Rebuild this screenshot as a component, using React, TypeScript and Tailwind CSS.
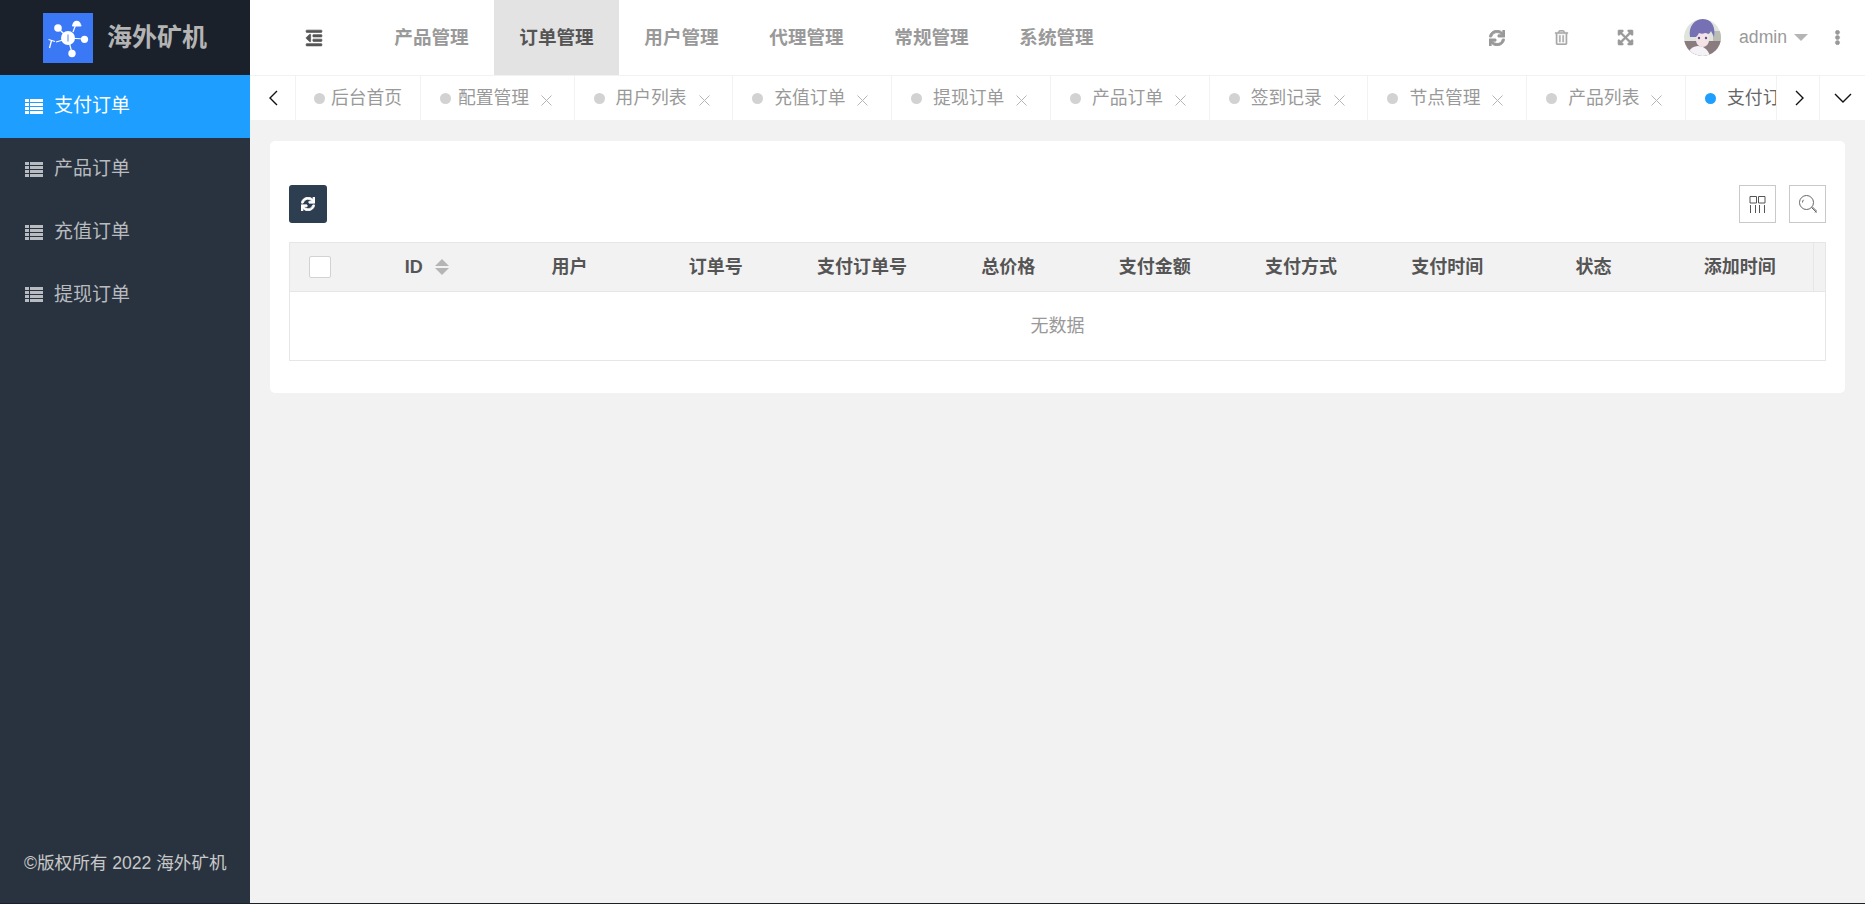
import { FaSync, FaRegTrashAlt, FaExpandArrowsAlt, FaOutdent, FaEllipsisV } from "react-icons/fa";

const menus = ["支付订单", "产品订单", "充值订单", "提现订单"];
const topNav = ["产品管理", "订单管理", "用户管理", "代理管理", "常规管理", "系统管理"];
const columns = ["用户", "订单号", "支付订单号", "总价格", "支付金额", "支付方式", "支付时间", "状态", "添加时间"];
const tabs = ["用户列表", "充值订单", "提现订单", "产品订单", "签到记录", "节点管理", "产品列表"];

function Logo() {
    return (
        <svg viewBox="0 0 50 50" className="w-[50px] h-[50px] shrink-0">
            <rect width="50" height="50" fill="#3b78f6" />
            <g stroke="#fff" strokeWidth="1.2">
                <path d="M15 15L25 25M33 11L30 19M25 25L41 26M25 25L29 40M20 27L13 29" />
            </g>
            <circle cx="25" cy="25" r="7" fill="#fff" />
            <circle cx="15" cy="15" r="3.8" fill="#fff" />
            <circle cx="41.5" cy="26.3" r="3.6" fill="#fff" />
            <circle cx="29" cy="40.5" r="3.7" fill="#fff" />
            <path d="M29.5 12a4.2 4.2 0 0 1 8.4 0z" fill="#fff" />
            <rect x="29" y="11.6" width="9.5" height="1.8" rx="0.9" fill="#fff" />
            <path d="M25 21.5v7" stroke="#8fb2f8" strokeWidth="1.6" />
            <path d="M5.5 26.5L12 28.5M8.5 27.5L6.5 35" stroke="#fff" strokeWidth="1.3" fill="none" />
        </svg>
    );
}

function Avatar() {
    return (
        <svg viewBox="0 0 37 37" className="w-[37px] h-[37px] rounded-full shrink-0">
            <rect width="37" height="37" fill="#dfe4dc" />
            <path d="M0 22h37v15H0z" fill="#8a7c7e" />
            <path d="M29 12h8v10h-8z" fill="#b9bdb4" />
            <path d="M3 37c1-6 6-10 11-10s10 3 12 10z" fill="#f4f2f6" />
            <path d="M12 14h13v7c0 4-3 7-6.500 7S12 25 12 21z" fill="#f3e3e6" />
            <path d="M6 18C4 7 11 0 19 0c8 0 13 7 11 18-1-2-2-4-3-6-1 2-2 3-3 3-1-1-2-1-3-1-2 1-4 1-6 0-1 2-2 3-3 4-1 0-2 0-3 0z" fill="#7670b4" />
            <circle cx="15" cy="19" r="1.2" fill="#565089" />
            <circle cx="22" cy="19" r="1.2" fill="#565089" />
        </svg>
    );
}

function ListIcon() {
    return (
        <svg viewBox="0 0 18 15" className="w-[18px] h-[15px] shrink-0" fill="currentColor">
            <path d="M0 0h4v3H0zM5 0h13v3H5zM0 4h4v3H0zM5 4h13v3H5zM0 8h4v3H0zM5 8h13v3H5zM0 12h4v3H0zM5 12h13v3H5z" />
        </svg>
    );
}

function Close() {
    return (
        <svg viewBox="0 0 11 11" className="w-[11px] h-[11px] shrink-0 mt-[4px]" stroke="#b5b5b5" strokeWidth="1" fill="none">
            <path d="M0.5 0.5L10.5 10.5M10.5 0.5L0.5 10.5" />
        </svg>
    );
}

function Tab({ label }: { label: string }) {
    return (
        <div className="flex items-center h-full w-[158.8px] shrink-0 pl-[19px] border-r border-[#f2f2f2]">
            <span className="w-[11px] h-[11px] rounded-full bg-[#d2d2d2] shrink-0" />
            <span className="ml-[11px] w-[72px] shrink-0 text-[17.8px] text-[#999] whitespace-nowrap">{label}</span>
            <span className="ml-[11px]"><Close /></span>
        </div>
    );
}

export default function App() {
    return (
        <div className="h-[904px] w-full flex flex-col overflow-hidden bg-[#f2f2f2] [font-family:'Liberation_Sans','Noto_Sans_CJK_SC',sans-serif]">
            <div className="flex flex-1 min-h-0">
                <aside className="w-[250px] shrink-0 flex flex-col bg-[#29333f]">
                    <div className="h-[75px] bg-[#1a212b] flex items-center pl-[43px]">
                        <Logo />
                        <span className="ml-[14px] text-[25px] font-bold text-[#b4b4b4] whitespace-nowrap">海外矿机</span>
                    </div>
                    <nav className="flex-1">
                        {menus.map((m, i) => (
                            <div
                                key={m}
                                className={
                                    i === 0
                                        ? "h-[63px] flex items-center pl-[25px] bg-[#1e9fff] text-white"
                                        : "h-[62.75px] flex items-center pl-[25px] text-[#b8bbbf]"
                                }
                            >
                                <ListIcon />
                                <span className="ml-[11px] text-[19px]">{m}</span>
                            </div>
                        ))}
                    </nav>
                    <div className="pl-[24px] pb-[28px] text-[17.6px] leading-[24px] text-[#c8c8c8] whitespace-nowrap">
                        ©版权所有 2022 海外矿机
                    </div>
                </aside>
                <main className="flex-1 min-w-0 flex flex-col">
                    <header className="h-[75px] bg-white flex items-stretch shrink-0">
                        <div className="w-[119px] shrink-0 flex items-center pl-[55px]">
                            <FaOutdent className="text-[18px] text-[#555]" strokeWidth={20} />
                        </div>
                        {topNav.map((n, i) => (
                            <div
                                key={n}
                                className={
                                    i === 1
                                        ? "w-[125px] flex items-center justify-center bg-[#e3e3e3] text-[#555] text-[18.6px] font-bold"
                                        : "w-[125px] flex items-center justify-center text-[#999] text-[18.6px] font-bold"
                                }
                            >
                                {n}
                            </div>
                        ))}
                        <div className="ml-auto flex items-center pr-[20px]">
                            <FaSync className="text-[16px] text-[#999]" strokeWidth={30} />
                            <FaRegTrashAlt className="ml-[49px] text-[15px] text-[#aaa]" strokeWidth={10} />
                            <FaExpandArrowsAlt className="ml-[48px] text-[17px] text-[#999]" strokeWidth={20} />
                            <span className="ml-[50px]"><Avatar /></span>
                            <span className="ml-[18px] text-[17.6px] text-[#999]">admin</span>
                            <span className="ml-[7px] w-0 h-0 border-x-[7px] border-x-transparent border-t-[7px] border-t-[#b5b5b5]" />
                            <FaEllipsisV className="ml-[22px] text-[15px] text-[#999]" strokeWidth={20} />
                        </div>
                    </header>
                    <div className="h-[45px] bg-white border-t border-[#f2f2f2] flex shrink-0">
                        <div className="w-[45.5px] shrink-0 flex items-center justify-center border-r border-[#f2f2f2] pl-[1px]">
                            <svg viewBox="0 0 10 16" className="w-[10px] h-[16px]" fill="none" stroke="#111" strokeWidth="1.4">
                                <path d="M9 1L2 8l7 7" />
                            </svg>
                        </div>
                        <div className="flex-1 min-w-0 flex overflow-hidden">
                            <div className="flex items-center h-full w-[125.5px] shrink-0 pl-[18.5px] pr-[18px] border-r border-[#f2f2f2]">
                                <span className="w-[11px] h-[11px] rounded-full bg-[#d2d2d2] shrink-0" />
                                <span className="ml-[6px] text-[17.8px] text-[#999] whitespace-nowrap">后台首页</span>
                            </div>
                            <div className="flex items-center h-full w-[153.5px] shrink-0 pl-[19px] border-r border-[#f2f2f2]">
                                <span className="w-[11px] h-[11px] rounded-full bg-[#d2d2d2] shrink-0" />
                                <span className="ml-[7px] w-[72px] shrink-0 text-[17.8px] text-[#999] whitespace-nowrap">配置管理</span>
                                <span className="ml-[11px]"><Close /></span>
                            </div>
                            {tabs.map((t, i) => (
                                <Tab key={i} label={t} />
                            ))}
                            <div className="flex items-center h-full shrink-0 pl-[19px]">
                                <span className="w-[11px] h-[11px] rounded-full bg-[#1e9fff] shrink-0" />
                                <span className="ml-[11px] text-[17.8px] text-[#666] whitespace-nowrap">支付订单</span>
                            </div>
                        </div>
                        <div className="w-[44px] shrink-0 flex items-center justify-center border-x border-[#f2f2f2] pl-[3px]">
                            <svg viewBox="0 0 10 16" className="w-[10px] h-[16px]" fill="none" stroke="#111" strokeWidth="1.4">
                                <path d="M1 1l7 7-7 7" />
                            </svg>
                        </div>
                        <div className="w-[45px] shrink-0 flex items-center justify-center pl-[1px]">
                            <svg viewBox="0 0 18 10" className="w-[18px] h-[10px]" fill="none" stroke="#111" strokeWidth="1.4">
                                <path d="M1 1l8 8 8-8" />
                            </svg>
                        </div>
                    </div>
                    <div className="flex-1 px-[20px] pt-[21px]">
                        <div className="bg-white rounded-[5px] h-[252px] px-[19px] pt-[44px]">
                            <div className="flex items-start h-[38px]">
                                <button className="w-[38px] h-[38px] rounded-[3px] bg-[#2c3e50] flex items-center justify-center">
                                    <FaSync className="text-[14px] text-white" strokeWidth={30} />
                                </button>
                                <div className="ml-auto flex gap-[13px]">
                                    <button className="w-[37px] h-[38px] border border-[#c9c9c9] flex items-center justify-center">
                                        <svg viewBox="0 0 17 17" className="w-[17px] h-[17px]" fill="none" stroke="#555" strokeWidth="1">
                                            <path d="M1 .5h6.500v6.500H1zM9.500 .5H16v6.500H9.500zM1.500 9v8M6.500 9v8M10.500 9v8M15.500 9v8" />
                                        </svg>
                                    </button>
                                    <button className="w-[37px] h-[38px] border border-[#c9c9c9] flex items-center justify-center">
                                        <svg viewBox="0 0 18 18" className="w-[18px] h-[18px]" fill="none" stroke="#666" strokeWidth="1">
                                            <circle cx="7.500" cy="7.500" r="7" />
                                            <path d="M3.500 7.500a4 4 0 0 1 1-2.700M12.500 12.500l5 5M13.500 12l4 4-1.500 1.500" />
                                        </svg>
                                    </button>
                                </div>
                            </div>
                            <div className="mt-[19px] border border-[#e6e6e6]">
                                <div className="grid grid-cols-[60px_repeat(10,minmax(0,1fr))_12px] h-[49px] bg-[#f2f2f2] border-b border-[#e6e6e6] text-[18px] font-bold text-[#555]">
                                    <div className="flex items-center justify-center">
                                        <span className="w-[22px] h-[22px] bg-white border border-[#d2d2d2] rounded-[2px]" />
                                    </div>
                                    <div className="flex items-center justify-center pl-[7px]">
                                        <span>ID</span>
                                        <span className="ml-[12px] flex flex-col gap-[2px]">
                                            <span className="w-0 h-0 border-x-[7px] border-x-transparent border-b-[7px] border-b-[#b5b5b5]" />
                                            <span className="w-0 h-0 border-x-[7px] border-x-transparent border-t-[7px] border-t-[#b5b5b5]" />
                                        </span>
                                    </div>
                                    {columns.map((c) => (
                                        <div key={c} className="flex items-center justify-center whitespace-nowrap">
                                            {c}
                                        </div>
                                    ))}
                                    <div className="border-l border-[#e6e6e6]" />
                                </div>
                                <div className="h-[68px] flex items-center justify-center pt-[1px] text-[18px] text-[#999]">无数据</div>
                            </div>
                        </div>
                    </div>
                </main>
            </div>
            <div className="h-[1px] bg-[#1a212b] shrink-0" />
        </div>
    );
}
